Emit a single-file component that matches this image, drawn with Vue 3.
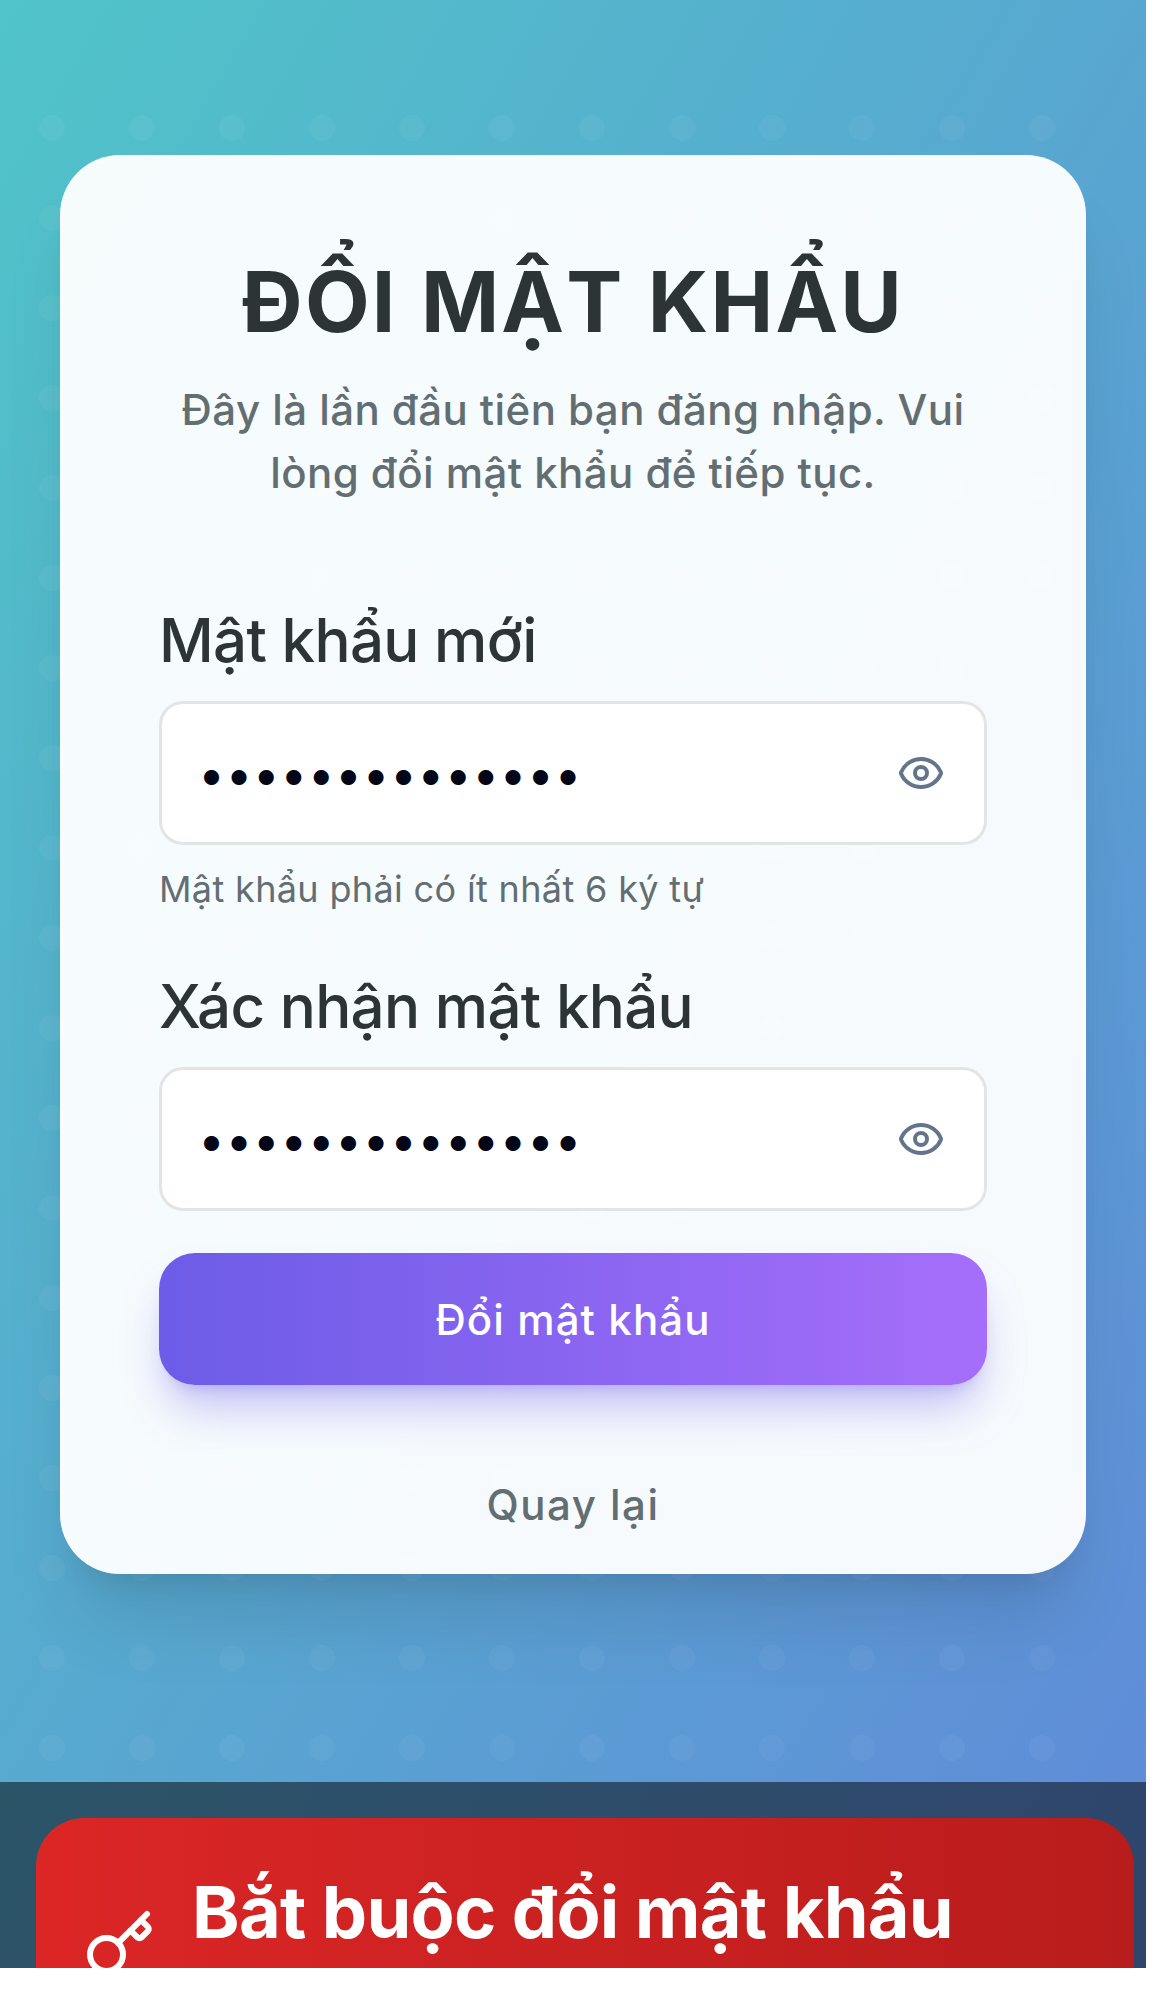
<script setup>
import { ref } from 'vue'

const fields = ref([
  { id: 'new', label: 'Mật khẩu mới', length: 14, hint: 'Mật khẩu phải có ít nhất 6 ký tự' },
  { id: 'confirm', label: 'Xác nhận mật khẩu', length: 14, hint: '' }
])
</script>

<template>
  <div class="page">
    <div class="dots"></div>
    <main class="screen">
      <section class="card">
        <h1>ĐỔI MẬT KHẨU</h1>
        <p class="subtitle">Đây là lần đầu tiên bạn đăng nhập. Vui<br />lòng đổi mật khẩu để tiếp tục.</p>
        <form class="form" @submit.prevent>
          <div v-for="f in fields" :key="f.id" class="field">
            <div class="label">{{ f.label }}</div>
            <div class="input">
              <span class="secret">{{ '•'.repeat(f.length) }}</span>
              <svg class="eye" viewBox="0 0 24 24">
                <path d="M2.062 12.348a1 1 0 0 1 0-.696 10.75 10.75 0 0 1 19.876 0 1 1 0 0 1 0 .696 10.75 10.75 0 0 1-19.876 0" />
                <circle cx="12" cy="12" r="3" />
              </svg>
            </div>
            <div v-if="f.hint" class="hint">{{ f.hint }}</div>
          </div>
          <button class="submit" type="submit"><span>Đổi mật khẩu</span></button>
        </form>
        <a class="back"><span>Quay lại</span></a>
      </section>
    </main>
    <aside class="overlay">
      <div class="dialog">
        <header class="dialog-head">
          <svg class="key" viewBox="0 0 24 24">
            <path d="m15.5 7.5 2.3 2.3a1 1 0 0 0 1.4 0l2.1-2.1a1 1 0 0 0 0-1.4L19 4" />
            <path d="m21 2-9.6 9.6" />
            <circle cx="7.5" cy="15.5" r="5.5" />
          </svg>
          <h2>Bắt buộc đổi mật khẩu</h2>
        </header>
      </div>
    </aside>
  </div>
</template>

<style>
body {
  margin: 0;
  background: #fff;
}
</style>

<style scoped>
* {
  box-sizing: border-box;
}
.page {
  position: relative;
  display: flex;
  flex-direction: column;
  width: 1146px;
  height: 1968px;
  overflow: hidden;
  font-family: Inter, 'Noto Sans', sans-serif;
  background: linear-gradient(to bottom right, #50c4c8, #608ad9);
}
.dots {
  position: absolute;
  left: 39px;
  top: 115px;
  width: 1017px;
  height: 1647px;
  background: radial-gradient(circle at 13px 13px, rgba(255, 255, 255, 0.04) 12.6px, transparent 13.2px) 0 0 / 90px 90px;
}
.screen {
  position: relative;
  height: 1782px;
  flex: none;
  padding: 155px 60px 0;
}
.card {
  display: flex;
  flex-direction: column;
  height: 1419px;
  padding: 93px 96px 0;
  border: 3px solid rgba(255, 255, 255, 0.2);
  border-radius: 60px;
  background: rgba(255, 255, 255, 0.95);
  box-shadow: 0 60px 75px -15px rgba(0, 0, 0, 0.1), 0 24px 30px -18px rgba(0, 0, 0, 0.1);
}
h1 {
  margin: 0;
  font-size: 84px;
  line-height: 101px;
  font-weight: 700;
  font-kerning: none;
  letter-spacing: 2.2px;
  word-spacing: 1.2px;
  text-align: center;
  white-space: nowrap;
  color: #2d3436;
}
.subtitle {
  margin: 26px 0 0;
  font-size: 42px;
  line-height: 63px;
  font-weight: 500;
  letter-spacing: 0.44px;
  text-align: center;
  white-space: nowrap;
  color: #636e72;
}
.form {
  display: flex;
  flex-direction: column;
  margin-top: 106px;
}
.label {
  font-size: 60px;
  line-height: 60px;
  font-weight: 500;
  letter-spacing: -0.66px;
  white-space: nowrap;
  color: #2d3436;
}
.input {
  display: flex;
  align-items: center;
  justify-content: space-between;
  height: 144px;
  margin-top: 31px;
  padding: 0 39px 0 36px;
  border: 3px solid #e3e5e4;
  border-radius: 24px;
  background: #fff;
}
.secret {
  padding-top: 1px;
  font-size: 48px;
  line-height: 60px;
  letter-spacing: 0.42px;
  color: #020617;
}
.eye,
.key {
  flex: none;
  fill: none;
  stroke-width: 2;
  stroke-linecap: round;
  stroke-linejoin: round;
}
.eye {
  width: 48px;
  height: 48px;
  stroke: #64748b;
}
.hint {
  margin: 17px 0 60px;
  font-size: 36px;
  line-height: 54px;
  letter-spacing: 0.35px;
  white-space: nowrap;
  color: #636e72;
}
.submit {
  height: 132px;
  margin-top: 42px;
  padding: 0;
  border: 0;
  border-radius: 36px;
  font: 500 42px/63px Inter, 'Noto Sans', sans-serif;
  letter-spacing: 1.1px;
  color: #fff;
  background: linear-gradient(90deg, #6c5ce7, #a66efa);
  box-shadow: 0 30px 45px -9px rgba(108, 92, 231, 0.36), 0 12px 18px -12px rgba(108, 92, 231, 0.36);
}
.back {
  margin-top: 90px;
  font-size: 42px;
  line-height: 60px;
  font-weight: 500;
  letter-spacing: 1.5px;
  text-align: center;
  color: #636e72;
}
.overlay {
  position: relative;
  flex: none;
  height: 186px;
  padding: 36px 12px 0 36px;
  background: rgba(0, 0, 0, 0.5);
}
.dialog {
  height: 300px;
  overflow: hidden;
  border-radius: 48px;
  background: #fff;
}
.dialog-head {
  display: flex;
  align-items: flex-start;
  gap: 36px;
  height: 300px;
  padding: 48px;
  background: linear-gradient(90deg, #dc2626, #b91c1c);
}
.key {
  width: 72px;
  height: 72px;
  margin-top: 42px;
  stroke: #fff;
}
h2 {
  margin: 1px 0 0;
  font-size: 72px;
  line-height: 90px;
  font-weight: 700;
  letter-spacing: -0.76px;
  white-space: nowrap;
  color: #fff;
}
</style>
